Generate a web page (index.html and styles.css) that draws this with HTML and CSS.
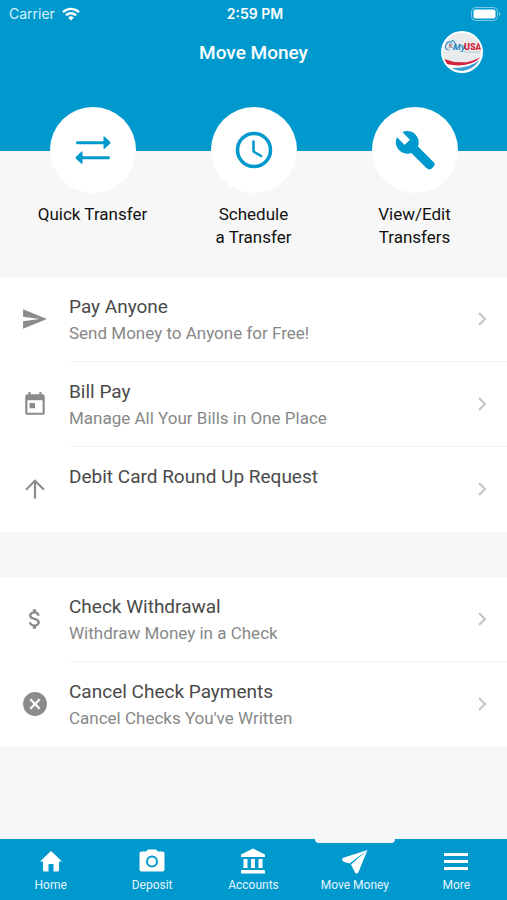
FILE: index.html
```html
<!DOCTYPE html>
<html lang="en">
<head>
    <meta charset="utf-8">
    <meta name="viewport" content="width=device-width, initial-scale=1">
    <title>Move Money</title>
    <link rel="stylesheet" href="styles.css">
</head>
<body>
    <header class="header">
        <div class="status-bar">
            <div class="carrier">
                <span>Carrier</span>
                <svg width="18" height="14" viewBox="0 0 18 14" fill="none" stroke="#fff" stroke-width="2.4">
                    <path d="M1 5.2a11.4 11.4 0 0 1 16 0"/>
                    <path d="M4 8.3a7.2 7.2 0 0 1 10 0"/>
                    <path d="M9 13.6L6.2 10.7a4 4 0 0 1 5.6 0z" fill="#fff" stroke="none"/>
                </svg>
            </div>
            <div class="time">2:59 PM</div>
            <div class="battery">
                <svg width="30" height="14" viewBox="0 0 30 14">
                    <rect x="0.5" y="0.5" width="26" height="13" rx="4" fill="none" stroke="#7fcbe6"/>
                    <rect x="2.5" y="2.5" width="22" height="9" rx="2" fill="#fff"/>
                    <path d="M28 5q3 2 0 4z" fill="#7fcbe6"/>
                </svg>
            </div>
        </div>
        <div class="title-bar">
            <h1>Move Money</h1>
            <button class="avatar" aria-label="Profile">
                <svg width="42" height="42" viewBox="0 0 42 42">
                    <defs><clipPath id="disc"><circle cx="21" cy="21" r="19"/></clipPath></defs>
                    <circle cx="21" cy="21" r="21" fill="#fff"/>
                    <g clip-path="url(#disc)">
                        <rect width="42" height="42" fill="#e9ebed"/>
                        <path d="M0 29Q24 37 42 23V42H0z" fill="#fff"/>
                        <path d="M3 28Q24 36 41 25Q30 38 5 33z" fill="#d3233d"/>
                        <path d="M9 37Q28 38 40 28Q32 40 16 41z" fill="#3e9fd2"/>
                        <g fill="none" stroke="#2f8fc0" stroke-width="1.2">
                            <path d="M8 19Q3 18 5 14Q6 10 10 11Q12 8 14 12Q16 15 13 17"/>
                            <path d="M8 14q2-3 4 0M8 17q3-3 5 2" stroke="#6aaed0"/>
                        </g>
                        <path d="M7 15l3-2 1 3z" fill="#dd6672"/>
                        <text x="12" y="19" class="logo-my">My</text>
                        <text x="23" y="19" class="logo-usa">USA</text>
                        <path d="M23 21h16" stroke="#b9c7d0"/>
                    </g>
                </svg>
            </button>
        </div>
    </header>

    <nav class="actions" aria-label="Transfers">
        <a href="#" class="action">
            <span class="circle">
                <svg width="40" height="40" viewBox="0 0 40 40" fill="#0099cd">
                    <path d="M4.500 11.300h26v-4.300q0-1.200 1-0.400l5.500 5.100q1 1 0 2l-5.500 5q-1 0.800-1-0.500v-3.900h-26a1.500 1.500 0 0 1 0-3z"/>
                    <path d="M35.500 26.200h-26v-4.200q0-1.200-1-0.400L3 26.700q-1 1 0 2l5.500 5q1 0.800 1-0.500V29.200h26a1.500 1.500 0 0 0 0-3z"/>
                </svg>
            </span>
            <span>Quick Transfer</span>
        </a>
        <a href="#" class="action">
            <span class="circle">
                <svg width="40" height="40" viewBox="0 0 40 40" fill="none" stroke="#0099cd" stroke-width="3" stroke-linecap="round" stroke-linejoin="round">
                    <circle cx="20" cy="20" r="16.500" stroke-width="3.500"/>
                    <path d="M19.500 11.500v10l7.500 4.500" stroke-width="2.600"/>
                </svg>
            </span>
            <span>Schedule<br>a Transfer</span>
        </a>
        <a href="#" class="action">
            <span class="circle">
                <svg width="40" height="40" viewBox="0.500 0.500 22.800 22.800" fill="#0099cd">
                    <path d="M22.700 19l-9.100-9.100c.9-2.300.4-5-1.500-6.900-2-2-5-2.400-7.400-1.300L9 6 6 9 1.600 4.700C.4 7.100.9 10.100 2.900 12.100c1.900 1.900 4.600 2.400 6.900 1.500l8.600 8.600c1 1 2.300 1 3.200.1l.8-.8c.9-.9 1-1.900.3-2.500z"/>
                </svg>
            </span>
            <span>View/Edit<br>Transfers</span>
        </a>
    </nav>

    <main>
        <div class="list">
            <a href="#" class="row">
                <svg class="icon" viewBox="0 0 24 24"><path d="M1 21L23 12 1 3v7l15 2-15 2z"/></svg>
                <div class="row-text">
                    <h2>Pay Anyone</h2>
                    <p>Send Money to Anyone for Free!</p>
                </div>
                <svg class="chevron" viewBox="0 0 10 16"><path d="M2 2l6 6-6 6"/></svg>
            </a>
            <a href="#" class="row">
                <svg class="icon" viewBox="0 0 24 24"><path d="M19 3h-1V1h-2v2H8V1H6v2H5a2 2 0 0 0-2 2v15a2 2 0 0 0 2 2h14a2 2 0 0 0 2-2V5a2 2 0 0 0-2-2zm0 17H5V8.500h14zM7 11h5v5H7z"/></svg>
                <div class="row-text">
                    <h2>Bill Pay</h2>
                    <p>Manage All Your Bills in One Place</p>
                </div>
                <svg class="chevron" viewBox="0 0 10 16"><path d="M2 2l6 6-6 6"/></svg>
            </a>
            <a href="#" class="row">
                <svg class="icon" viewBox="0 0 24 24"><path d="M3 12l1.400 1.400L11 6.800V21h2V6.800l6.600 6.600L21 12l-9-9z"/></svg>
                <div class="row-text">
                    <h2>Debit Card Round Up Request</h2>
                </div>
                <svg class="chevron" viewBox="0 0 10 16"><path d="M2 2l6 6-6 6"/></svg>
            </a>
        </div>

        <div class="list">
            <a href="#" class="row">
                <svg class="icon" viewBox="0 0 24 24"><path d="M11.800 10.900c-2.270-.59-3-1.200-3-2.150 0-1.090 1.010-1.850 2.700-1.850 1.780 0 2.440.85 2.500 2.100h2.210c-.07-1.720-1.120-3.300-3.210-3.810V3h-3v2.160c-1.940.42-3.500 1.680-3.500 3.610 0 2.310 1.910 3.460 4.700 4.130 2.500.6 3 1.480 3 2.410 0 .69-.49 1.790-2.700 1.790-2.060 0-2.870-.92-2.980-2.100H6.320c.12 2.190 1.760 3.420 3.680 3.830V21h3v-2.150c1.950-.37 3.500-1.500 3.500-3.550 0-2.840-2.430-3.810-4.700-4.400z"/></svg>
                <div class="row-text">
                    <h2>Check Withdrawal</h2>
                    <p>Withdraw Money in a Check</p>
                </div>
                <svg class="chevron" viewBox="0 0 10 16"><path d="M2 2l6 6-6 6"/></svg>
            </a>
            <a href="#" class="row">
                <svg class="icon" viewBox="0 0 24 24"><path d="M12 1a11 11 0 1 0 0 22 11 11 0 0 0 0-22zm5 14.590L15.590 17 12 13.410 8.410 17 7 15.590 10.590 12 7 8.410 8.410 7 12 10.590 15.590 7 17 8.410 13.410 12z"/></svg>
                <div class="row-text">
                    <h2>Cancel Check Payments</h2>
                    <p>Cancel Checks You've Written</p>
                </div>
                <svg class="chevron" viewBox="0 0 10 16"><path d="M2 2l6 6-6 6"/></svg>
            </a>
        </div>
    </main>

    <nav class="tabs" aria-label="Main">
        <a href="#" class="tab">
            <svg viewBox="0 0 28 28"><path d="M14 4L3 14.500h3V23q0 1.500 1.500 1.500H11.500V17h5v7.500h4Q22 24.500 22 23v-8.500h3z"/></svg>
            <span>Home</span>
        </a>
        <a href="#" class="tab">
            <svg viewBox="0 0 28 28">
                <path d="M10 2.500h8l2 2h4.500Q26.500 4.500 26.500 6.500v16q0 2-2 2h-21q-2 0-2-2v-16q0-2 2-2H8z"/>
                <circle cx="14" cy="14.500" r="5" fill="none" stroke="#0099cd" stroke-width="2"/>
            </svg>
            <span>Deposit</span>
        </a>
        <a href="#" class="tab">
            <svg viewBox="0 0 28 28"><path d="M14 1.500L2 7.500v2.500h24V7.500zM4.500 12h4v9h-4zM12 12h4v9h-4zM19.500 12h4v9h-4zM3 23h22q1 0 1 1v2.500H2V24q0-1 1-1z"/></svg>
            <span>Accounts</span>
        </a>
        <a href="#" class="tab active">
            <svg viewBox="0 0 28 28"><path d="M26.500 3L1.500 11q-1 3 2 4l5 1.500zM26.500 3L10 17.500l4 8q2 2.500 3.500-0.500z"/></svg>
            <span>Move Money</span>
        </a>
        <a href="#" class="tab">
            <svg viewBox="0 0 28 28"><path d="M2 6h24v3H2zM2 13h24v3H2zM2 20h24v3H2z"/></svg>
            <span>More</span>
        </a>
    </nav>
</body>
</html>
```
FILE: styles.css
```css
* {
    box-sizing: border-box;
}
body {
    margin: 0;
    min-height: 100vh;
    display: flex;
    flex-direction: column;
    font-family: Roboto, "Liberation Sans", sans-serif;
    background-color: #f7f7f7;
}
a {
    color: inherit;
    text-decoration: none;
}
svg {
    display: block;
}
.header {
    background-color: #0099cd;
    color: #fff;
    padding-bottom: 78px;
}
.status-bar {
    display: grid;
    grid-template-columns: 1fr auto 1fr;
    align-items: center;
    height: 27px;
    padding: 0 6px 0 9px;
    font-family: Inter, sans-serif;
    font-size: 14px;
}
.carrier {
    display: flex;
    align-items: center;
    gap: 7px;
    color: #d9f3fc;
}
.time {
    font-weight: 600;
}
.battery {
    justify-self: end;
}
.title-bar {
    display: grid;
    grid-template-columns: 1fr auto 1fr;
    align-items: center;
    padding: 4px 24px 0;
}
h1 {
    grid-column: 2;
    margin: 0;
    font-size: 19px;
    font-weight: 500;
}
.avatar {
    justify-self: end;
    padding: 0;
    border: none;
    background: none;
    cursor: pointer;
}
.logo-my {
    font: italic 700 9px "Open Sans", sans-serif;
    fill: #2789c3;
}
.logo-usa {
    font: 900 9px Roboto, sans-serif;
    fill: #d3233d;
}
.actions {
    display: grid;
    grid-template-columns: repeat(3, 1fr);
    margin-top: -44px;
    padding: 0 12px 28px;
}
.action {
    display: flex;
    flex-direction: column;
    align-items: center;
    gap: 10px;
    font-size: 17px;
    line-height: 23px;
    text-align: center;
    color: #111;
}
.circle {
    display: flex;
    align-items: center;
    justify-content: center;
    width: 86px;
    height: 86px;
    border-radius: 50%;
    background-color: #fff;
}
main {
    flex-grow: 1;
}
.list {
    margin-bottom: 45px;
    background-color: #fff;
}
.row {
    position: relative;
    display: flex;
    align-items: center;
    min-height: 85px;
    padding-left: 22px;
}
.icon {
    width: 26px;
    height: 26px;
    margin: 0 21px 2px 0;
    fill: #8b8b8b;
}
.row-text {
    flex-grow: 1;
    align-self: stretch;
    padding: 17px 0 16px;
}
/* divider starts at the text, not at the icon */
.row:not(:last-child)::after {
    content: "";
    position: absolute;
    left: 69px;
    right: 0;
    bottom: 0;
    border-bottom: 1px solid #f1f1f1;
}
h2, p {
    margin: 0;
    line-height: 26px;
    font-weight: 400;
}
h2 {
    font-size: 19px;
    color: #4a4a4a;
}
p {
    font-size: 17px;
    color: #888;
}
.chevron {
    width: 10px;
    height: 16px;
    margin: 0 20px 2px 0;
    fill: none;
    stroke: #c4c4c4;
    stroke-width: 2;
}
.tabs {
    display: grid;
    grid-template-columns: repeat(5, 1fr);
    background-color: #0099cd;
    color: #e4f6fd;
}
.tab {
    position: relative;
    display: flex;
    flex-direction: column;
    align-items: center;
    gap: 2px;
    height: 61px;
    padding-top: 8px;
    font-size: 12px;
    line-height: 16px;
}
.tab svg {
    width: 28px;
    height: 28px;
    fill: #fff;
}
/* notch over the current tab */
.tab.active::before {
    content: "";
    position: absolute;
    top: 0;
    width: 80px;
    height: 4px;
    border-radius: 0 0 4px 4px;
    background-color: #f7f7f7;
}
```
